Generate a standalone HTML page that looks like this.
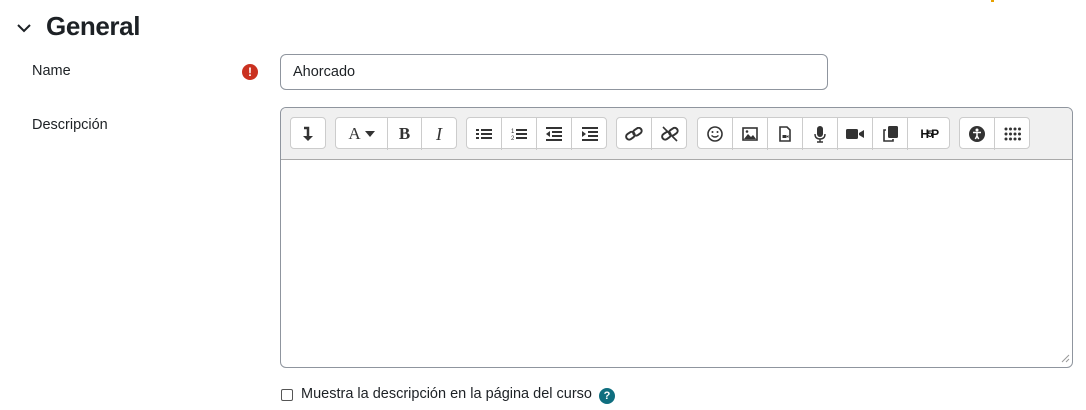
<!DOCTYPE html>
<html><head><meta charset="utf-8"><style>
*{box-sizing:border-box}
body{margin:0;width:1086px;height:410px;background:#fff;font-family:"Liberation Sans",sans-serif;color:#1d2125;position:relative;overflow:hidden}
.abs{position:absolute}
.btn{position:absolute;top:0;height:32px;display:flex;align-items:center;justify-content:center;border-right:1px solid #ccc}
.btn:last-child{border-right:none}
.grp{position:absolute;top:117px;height:32px;background:#fff;border:1px solid #ccc;border-radius:4px}
svg{display:block}
</style></head><body>
<div class="abs" style="left:991px;top:0;width:3px;height:2px;background:#e6a000"></div>
<svg class="abs" style="left:16px;top:22px" width="16" height="12" viewBox="0 0 16 12"><path d="M2 3l6 6 6-6" fill="none" stroke="#1d2125" stroke-width="2"/></svg>
<div class="abs" style="left:46px;top:11px;font-size:26px;font-weight:bold;letter-spacing:-0.4px">General</div>
<div class="abs" style="left:32px;top:63px;font-size:14.5px">Name</div>
<div class="abs" style="left:242px;top:64px;width:16px;height:16px;border-radius:50%;background:#ca3120;color:#fff;font-weight:bold;font-size:12px;text-align:center;line-height:16px">!</div>
<div class="abs" style="left:280px;top:54px;width:548px;height:36px;border:1px solid #8f959e;border-radius:6px;padding:9px 12px;font-size:14.5px">Ahorcado</div>
<div class="abs" style="left:32px;top:117px;font-size:14.5px">Descripción</div>
<div class="abs" style="left:280px;top:107px;width:793px;height:261px;border:1px solid #8f959e;border-radius:6px;overflow:hidden">
<div style="height:52px;background:#f0f0f0;border-bottom:1px solid #aaa"></div></div>
<svg class="abs" style="left:1060px;top:353px" width="10" height="10"><path d="M9 2L2 9M9 6L6 9" stroke="#999"/></svg>

<div class="grp" style="left:290px;width:36px"><div class="btn" style="left:0;width:34px"><svg width="12" height="16" viewBox="0 0 12 16"><path d="M2 2h4v9" fill="none" stroke="#333" stroke-width="2.5"/><path d="M1 10h10l-5 5z" fill="#333"/></svg></div></div>

<div class="grp" style="left:335px;width:122px">
<div class="btn" style="left:0;width:52px;font-family:'Liberation Serif',serif;font-size:17px;color:#333">A<svg style="margin-left:4px" width="10" height="6"><path d="M0 0h10L5 6z" fill="#333"/></svg></div>
<div class="btn" style="left:52px;width:34px;font-family:'Liberation Serif',serif;font-size:17px;font-weight:bold;color:#333">B</div>
<div class="btn" style="left:86px;width:34px;font-family:'Liberation Serif',serif;font-size:18px;font-style:italic;color:#333">I</div></div>

<div class="grp" style="left:466px;width:141px">
<div class="btn" style="left:0;width:35px"><svg width="16" height="12"><g fill="#333"><rect x="0" y="1" width="3" height="2"/><rect x="0" y="5" width="3" height="2"/><rect x="0" y="9" width="3" height="2"/><rect x="5" y="1" width="11" height="2"/><rect x="5" y="5" width="11" height="2"/><rect x="5" y="9" width="11" height="2"/></g></svg></div>
<div class="btn" style="left:35px;width:35px"><svg width="16" height="14"><g fill="#333"><text x="0" y="6" font-size="6" font-family="Liberation Sans">1</text><text x="0" y="13" font-size="6" font-family="Liberation Sans">2</text><rect x="5" y="2" width="11" height="2"/><rect x="5" y="6" width="11" height="2"/><rect x="5" y="10" width="11" height="2"/></g></svg></div>
<div class="btn" style="left:70px;width:35px"><svg width="16" height="14"><g fill="#333"><rect x="0" y="0" width="16" height="2"/><rect x="6" y="4" width="10" height="2"/><rect x="6" y="8" width="10" height="2"/><rect x="0" y="12" width="16" height="2"/><path d="M4 4v6L0 7z"/></g></svg></div>
<div class="btn" style="left:105px;width:35px"><svg width="16" height="14"><g fill="#333"><rect x="0" y="0" width="16" height="2"/><rect x="6" y="4" width="10" height="2"/><rect x="6" y="8" width="10" height="2"/><rect x="0" y="12" width="16" height="2"/><path d="M0 4v6l4-3z"/></g></svg></div></div>

<div class="grp" style="left:616px;width:71px">
<div class="btn" style="left:0;width:35px"><svg width="18" height="14" viewBox="0 0 18 14"><g fill="none" stroke="#333" stroke-width="2"><rect x="1" y="6" width="9" height="6" rx="3" transform="rotate(-35 5 9)"/><rect x="8" y="2" width="9" height="6" rx="3" transform="rotate(-35 12 5)"/></g></svg></div>
<div class="btn" style="left:35px;width:35px"><svg width="18" height="16" viewBox="0 0 18 16"><g fill="none" stroke="#333" stroke-width="2"><rect x="1" y="7" width="9" height="6" rx="3" transform="rotate(-35 5 10)"/><rect x="8" y="3" width="9" height="6" rx="3" transform="rotate(-35 12 6)"/><path d="M2 1l14 14" stroke-width="1.6"/></g></svg></div></div>

<div class="grp" style="left:697px;width:253px">
<div class="btn" style="left:0;width:35px"><svg width="16" height="16"><circle cx="8" cy="8" r="7" fill="none" stroke="#333" stroke-width="1.6"/><circle cx="5.5" cy="6" r="1" fill="#333"/><circle cx="10.5" cy="6" r="1" fill="#333"/><path d="M4.5 9.5q3.5 3 7 0" fill="none" stroke="#333" stroke-width="1.4"/></svg></div>
<div class="btn" style="left:35px;width:35px"><svg width="16" height="14"><rect x="1" y="1" width="14" height="12" fill="none" stroke="#333" stroke-width="1.6"/><path d="M2 12l4-5 3 3 2-2 3 4z" fill="#333"/><circle cx="5" cy="4.5" r="1.3" fill="#333"/></svg></div>
<div class="btn" style="left:70px;width:35px"><svg width="12" height="16"><path d="M1 1h7l3 3v11H1z" fill="none" stroke="#333" stroke-width="1.6"/><rect x="3.5" y="9" width="4" height="3" fill="#333"/><path d="M7.5 10.5l2-1.5v3z" fill="#333"/></svg></div>
<div class="btn" style="left:105px;width:35px"><svg width="12" height="17"><rect x="3" y="0" width="6" height="11" rx="3" fill="#333"/><path d="M1 8q0 5 5 5t5-5M6 13v3M3 16h6" fill="none" stroke="#333" stroke-width="1.4"/></svg></div>
<div class="btn" style="left:140px;width:35px"><svg width="18" height="12"><rect x="0" y="1" width="12" height="10" rx="1.5" fill="#333"/><path d="M13 5l5-3v8l-5-3z" fill="#333"/></svg></div>
<div class="btn" style="left:175px;width:35px"><svg width="15" height="16"><rect x="5" y="0" width="10" height="12" rx="1.5" fill="#333"/><path d="M3 4H1v11h9v-2" fill="none" stroke="#333" stroke-width="1.6"/></svg></div>
<div class="btn" style="left:210px;width:42px;font-weight:bold;font-size:12px;letter-spacing:-1.5px;color:#111">H<span style="font-size:9px">5</span>P</div></div>

<div class="grp" style="left:959px;width:71px">
<div class="btn" style="left:0;width:35px"><svg width="16" height="16"><circle cx="8" cy="8" r="8" fill="#333"/><circle cx="8" cy="4" r="1.5" fill="#fff"/><path d="M4 6.5h8M8 6.5v4M6.3 13l1.7-3 1.7 3" fill="none" stroke="#fff" stroke-width="1.5"/></svg></div>
<div class="btn" style="left:35px;width:35px"><svg width="18" height="14"><g fill="#333"><circle cx="2" cy="2" r="1.5"/><circle cx="6.5" cy="2" r="1.5"/><circle cx="11" cy="2" r="1.5"/><circle cx="15.5" cy="2" r="1.5"/><circle cx="2" cy="7" r="1.5"/><circle cx="6.5" cy="7" r="1.5"/><circle cx="11" cy="7" r="1.5"/><circle cx="15.5" cy="7" r="1.5"/><circle cx="2" cy="12" r="1.5"/><circle cx="6.5" cy="12" r="1.5"/><circle cx="11" cy="12" r="1.5"/><circle cx="15.5" cy="12" r="1.5"/></g></svg></div></div>

<div class="abs" style="left:281px;top:389px;width:12px;height:12px;border:1px solid #555;border-radius:2px"></div>
<div class="abs" style="left:301px;top:386px;font-size:14.5px">Muestra la descripción en la página del curso</div>
<div class="abs" style="left:599px;top:388px;width:16px;height:16px;border-radius:50%;background:#0f6e7f;color:#fff;font-weight:bold;font-size:11px;text-align:center;line-height:16px">?</div>
</body></html>
